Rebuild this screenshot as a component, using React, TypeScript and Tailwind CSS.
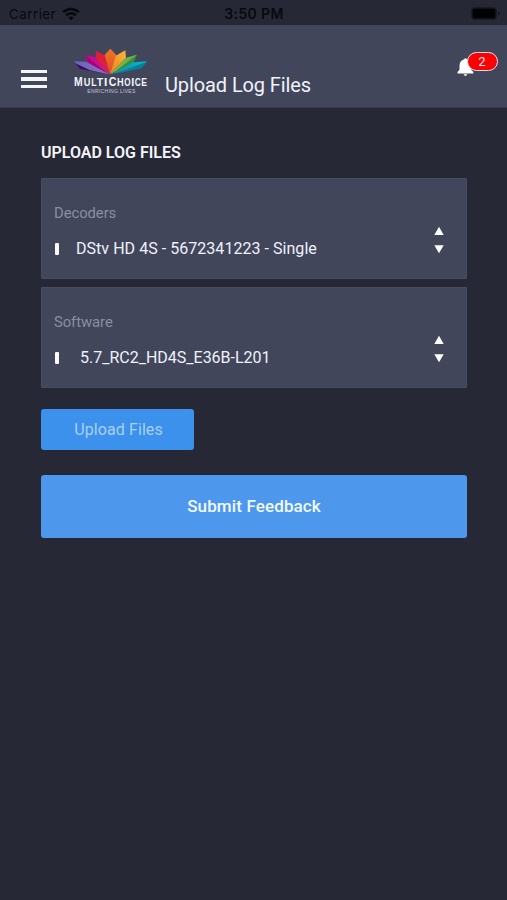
function StatusBar() {
  return (
    <div className="flex h-[25px] items-center justify-between bg-[#262836] pl-[9px] pr-[6px] font-['Inter','Liberation_Sans',sans-serif] text-[#08090e]">
      <div className="flex w-[120px] items-center gap-[6px] pt-[2px]">
        <span className="text-[13.5px] leading-4 tracking-[0.4px]">Carrier</span>
        <svg width="18" height="14" viewBox="0 0 18 14" fill="none" stroke="currentColor" strokeWidth="2.6">
          <path d="M1.2 5.2C5.4 .9 12.6 .9 16.8 5.2" />
          <path d="M4.2 8.2c2.7-2.6 6.9-2.6 9.6 0" />
          <path d="M9 13.3 6.3 10.6c1.5-1.4 3.9-1.4 5.4 0Z" fill="currentColor" stroke="none" />
        </svg>
      </div>
      <span className="mr-[2px] pt-[2px] text-[14px] font-semibold leading-4 tracking-[0.35px]">3:50 PM</span>
      <div className="flex w-[120px] items-center justify-end pt-[2px]">
        <svg width="30" height="13" viewBox="0 0 30 13">
          <rect x=".5" y=".5" width="25" height="12" rx="3.5" fill="#10121a" stroke="#191b25" />
          <rect x="2" y="2" width="22" height="9" rx="2" fill="#010204" />
          <path d="M27 4.5c2 .5 2 3.5 0 4Z" fill="#151721" />
        </svg>
      </div>
    </div>
  );
}

const wordmark = [
  { char: "M", x: 222, width: 26, size: 37 },
  { char: "U", x: 251, width: 20, size: 31 },
  { char: "L", x: 274, width: 16, size: 31 },
  { char: "T", x: 290, width: 19, size: 31 },
  { char: "I", x: 312, width: 10, size: 31 },
  { char: "C", x: 326, width: 23, size: 37 },
  { char: "H", x: 351, width: 20, size: 31 },
  { char: "O", x: 373, width: 19, size: 31 },
  { char: "I", x: 394, width: 9, size: 31 },
  { char: "C", x: 404, width: 18, size: 31 },
  { char: "E", x: 424, width: 17, size: 31 },
];

function Logo() {
  return (
    <svg width="78" height="48" viewBox="216 141 234 144" className="shrink-0">
      <defs>
        <linearGradient id="violet" x1="0" x2="1"><stop stopColor="#6a62bd" /><stop offset="1" stopColor="#8f70b7" /></linearGradient>
        <linearGradient id="magenta" x1="0" x2="1" y2="1"><stop stopColor="#d0008f" /><stop offset="1" stopColor="#b6298a" /></linearGradient>
        <linearGradient id="red" y1="0" y2="1" x2=".6"><stop stopColor="#e31b35" /><stop offset="1" stopColor="#d92445" /></linearGradient>
        <linearGradient id="orange" x1="0" y2="1" x2="0"><stop stopColor="#ef7625" /><stop offset="1" stopColor="#e34d24" /></linearGradient>
        <linearGradient id="amber" x1="1" x2="0" y2="1"><stop stopColor="#fbb735" /><stop offset="1" stopColor="#ec8025" /></linearGradient>
        <linearGradient id="green" x1="1" x2="0" y2="1"><stop stopColor="#5eb54b" /><stop offset="1" stopColor="#9bad37" /></linearGradient>
        <linearGradient id="teal" x1="1" x2="0" y2=".5"><stop stopColor="#00b9cf" /><stop offset="1" stopColor="#1f8b9c" /></linearGradient>
      </defs>
      <path d="M222 184 258 185 330 223 290 215 240 204Z" fill="url(#violet)" />
      <path d="M226 190 240 206 318 222 270 211Z" fill="#3b086b" />
      <path d="M255 165 287 172 330 223 265 188Z" fill="url(#magenta)" />
      <path d="M256 166 267 189 320 219Z" fill="#a50080" />
      <path d="M287 152 316 167 330 223 289 177Z" fill="url(#red)" />
      <path d="M331 146 349 165 330 223 314 165Z" fill="url(#orange)" />
      <path d="M376 151 378 174 330 223 347 167Z" fill="url(#amber)" />
      <path d="M410 164 400 187 330 223 378 173Z" fill="url(#green)" />
      <path d="M410 165 400 188 342 217Z" fill="#329044" />
      <path d="M441 184 424 203 330 223 400 187Z" fill="url(#teal)" />
      <path d="M441 185 424 205 345 221Z" fill="#087e9d" />
      <g fill="#f4f5fa" fontFamily="'Liberation Sans', sans-serif" fontWeight="700">
        {wordmark.map((letter) => (
          <text key={letter.x} x={letter.x} y="258" fontSize={letter.size} textLength={letter.width} lengthAdjust="spacingAndGlyphs">{letter.char}</text>
        ))}
      </g>
      <text x="262" y="278" fontSize="15" fontFamily="'Liberation Sans Narrow', 'Liberation Sans', sans-serif" fill="#c5c8d5" textLength="144">ENRICHING LIVES</text>
    </svg>
  );
}

function Header() {
  return (
    <header className="flex h-[83px] items-start border-b border-[#343849] bg-[#41465b] pl-[21px]">
      <button aria-label="Menu" className="mt-[45px] flex w-[26px] shrink-0 flex-col gap-[4px]">
        <span className="h-[3px] bg-[#f5f6fb]" />
        <span className="h-[4px] bg-[#f5f6fb]" />
        <span className="h-[3px] bg-[#f5f6fb]" />
      </button>
      <div className="ml-[25px] mt-[22px]"><Logo /></div>
      <h1 className="ml-[15px] mt-[46px] whitespace-nowrap text-[20px] leading-[28px] tracking-[-0.1px] text-[#f0f2fb]">Upload Log Files</h1>
      <div className="relative ml-auto mr-[9px] mt-[27px] h-[28px] w-[40px] shrink-0">
        <svg className="absolute left-[-1px] top-[5px]" width="18" height="20" viewBox="0 0 18 20" fill="#fff">
          <path d="M7.2 2.2a1.4 1.4 0 0 1 2.6 0c3 .8 4.5 3.3 4.5 6.3v4.2l2 2.2v1.5H.5v-1.5l2-2.2V8.500c0-3 1.700-5.500 4.700-6.300ZM6.700 17.200h3.500c-.3 2-3.200 2-3.500 0Z" />
        </svg>
        <span className="absolute left-[8.5px] top-0 flex h-[19px] w-[31px] items-center justify-center rounded-full border border-[#e9dfe8] bg-[#fd0004] text-[13px] leading-none text-[#ffe5e8]">2</span>
      </div>
    </header>
  );
}

function Picker({ label, value, valueClass }: { label: string; value: string; valueClass: string }) {
  return (
    <section className="flex h-[101px] items-start justify-between rounded-[1px] border border-[#474c60] bg-[#41465b] pl-[12px] pr-[22px]">
      <div className="pt-[22px]">
        <div className="text-[14.8px] leading-[24px] tracking-[-0.05px] text-[#8a8ea1]">{label}</div>
        <div className="mt-[12px] flex h-[24px] items-center">
          <span className="mb-px ml-px h-[12px] w-[4px] rounded-[1px] bg-[#fafbff]" />
          <span className={valueClass}>{value}</span>
        </div>
      </div>
      <svg className="mt-[47px]" width="10" height="28" viewBox="0 0 10 28" fill="#fff">
        <path d="M5 .8 9.700 9H.3ZM.3 19.200h9.400L5 27.200Z" />
      </svg>
    </section>
  );
}

export default function App() {
  return (
    <div className="min-h-[900px] w-full bg-[#262836] font-['Roboto','Liberation_Sans',sans-serif]">
      <StatusBar />
      <Header />
      <main className="flex flex-col pl-[41px] pr-[40px] pt-[33px]">
        <h2 className="mb-[13px] text-[16px] font-semibold leading-[24px] tracking-[0px] text-[#f5f6fb]">UPLOAD LOG FILES</h2>
        <div className="flex flex-col gap-[8px]">
          <Picker label="Decoders" value="DStv HD 4S - 5672341223 - Single" valueClass="ml-[17px] whitespace-nowrap text-[16px] leading-6 tracking-[0.04px] text-[#f0f2fb]" />
          <Picker label="Software" value="5.7_RC2_HD4S_E36B-L201" valueClass="ml-[21px] whitespace-nowrap text-[16px] leading-6 text-[#f0f2fb]" />
        </div>
        <button className="mt-[21px] h-[41px] w-[153px] rounded-[3px] bg-[#3b91eb] pl-[2px] pt-px text-[16px] tracking-[0.1px] text-[#a9d0fa]">Upload Files</button>
        <button className="mt-[25px] h-[63px] rounded-[3px] bg-[#4d98ec] text-[17px] font-medium tracking-[0.13px] text-[#f3f9ff]">Submit Feedback</button>
      </main>
    </div>
  );
}
